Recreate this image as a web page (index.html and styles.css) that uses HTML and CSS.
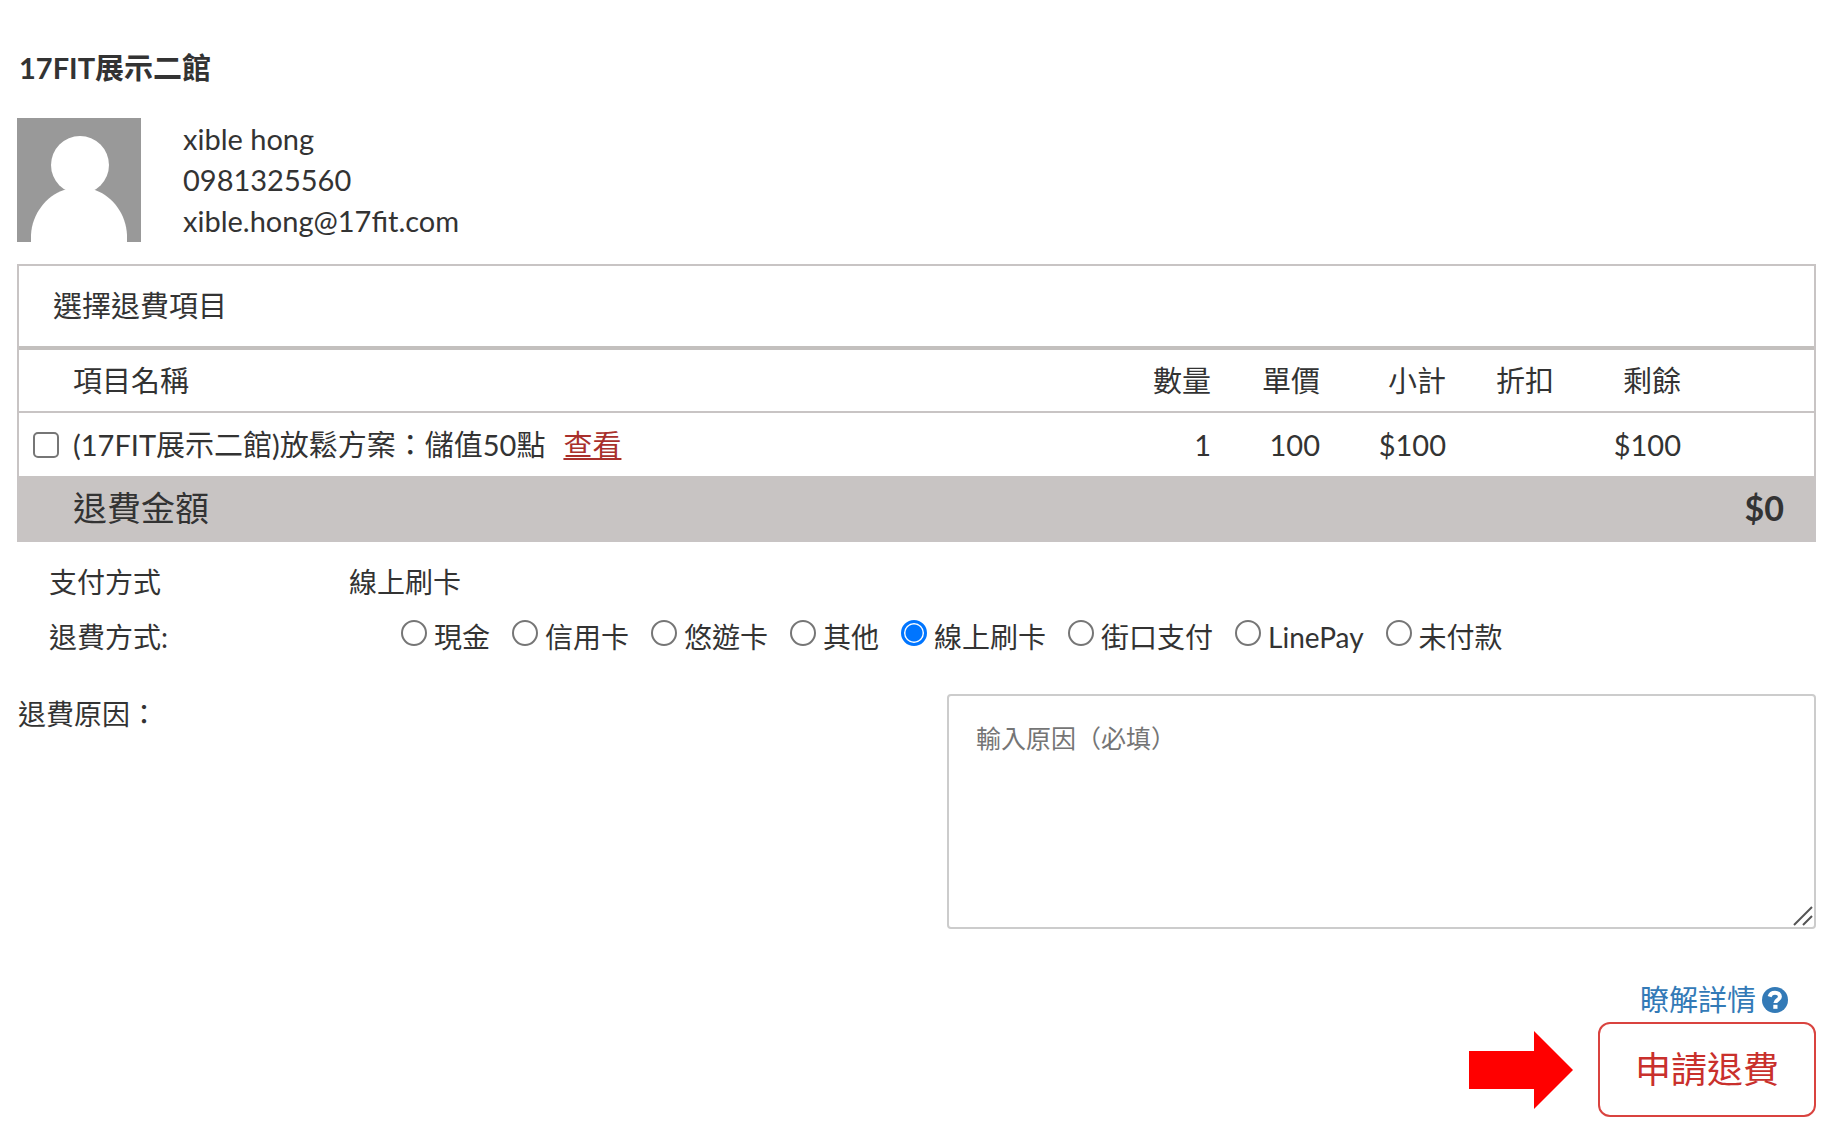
FILE: index.html
```html
<!DOCTYPE html>
<html lang="zh-Hant">
<head>
  <meta charset="utf-8">
  <meta name="viewport" content="width=device-width, initial-scale=1">
  <title>申請退費</title>
  <link rel="stylesheet" href="styles.css">
</head>
<body>
  <main class="page">
    <h1 class="store">17FIT展示二館</h1>

    <section class="member">
      <svg class="avatar" viewBox="0 0 124 124" role="img" aria-label="會員頭像">
        <rect width="124" height="124" fill="#999"/>
        <path d="M14 124V117C15 96 29 78 47 72H78C97 79 109 97 110 117V124Z" fill="#fff"/>
        <circle cx="63" cy="47" r="29" fill="#fff"/>
      </svg>
      <div class="member-info">
        <div>xible hong</div>
        <div>0981325560</div>
        <div>xible.hong@17fit.com</div>
      </div>
    </section>

    <form class="refund">
      <section class="panel">
        <h2 class="panel-title">選擇退費項目</h2>
        <table class="items">
          <colgroup>
            <col class="col-check"><col><col class="col-qty"><col class="col-price"><col class="col-sub"><col class="col-off"><col class="col-left"><col class="col-end">
          </colgroup>
          <thead>
            <tr>
              <th></th>
              <th class="name">項目名稱</th>
              <th>數量</th>
              <th>單價</th>
              <th>小計</th>
              <th>折扣</th>
              <th>剩餘</th>
              <th></th>
            </tr>
          </thead>
          <tbody>
            <tr>
              <td class="check"><input type="checkbox" id="item1" class="tick"></td>
              <td class="name"><label for="item1">(17FIT展示二館)放鬆方案：儲值50點</label><a class="view" href="#">查看</a></td>
              <td>1</td>
              <td>100</td>
              <td>$100</td>
              <td></td>
              <td>$100</td>
              <td></td>
            </tr>
          </tbody>
          <tfoot>
            <tr>
              <td></td>
              <th class="name">退費金額</th>
              <td class="total" colspan="6">$0</td>
            </tr>
          </tfoot>
        </table>
      </section>

      <div class="field">
        <span class="field-label">支付方式</span>
        <span>線上刷卡</span>
      </div>
      <div class="field" role="radiogroup" aria-labelledby="method">
        <span class="field-label" id="method">退費方式:</span>
        <div class="options">
          <label class="option"><input type="radio" name="method" class="dot">現金</label>
          <label class="option"><input type="radio" name="method" class="dot">信用卡</label>
          <label class="option"><input type="radio" name="method" class="dot">悠遊卡</label>
          <label class="option"><input type="radio" name="method" class="dot">其他</label>
          <label class="option"><input type="radio" name="method" class="dot" checked>線上刷卡</label>
          <label class="option"><input type="radio" name="method" class="dot">街口支付</label>
          <label class="option"><input type="radio" name="method" class="dot">LinePay</label>
          <label class="option"><input type="radio" name="method" class="dot">未付款</label>
        </div>
      </div>

      <div class="reason">
        <label for="reason">退費原因：</label>
        <div class="reason-box">
          <textarea id="reason" placeholder="輸入原因（必填）"></textarea>
          <svg class="grip" viewBox="0 0 20 20" aria-hidden="true">
            <path d="M1 19L19 1M10 19L19 10" stroke="#555" stroke-width="2" fill="none"/>
          </svg>
        </div>
      </div>

      <div class="actions">
        <a class="more" href="#">瞭解詳情
          <svg class="help" viewBox="0 0 26 26" aria-hidden="true">
            <circle cx="13" cy="13" r="13" fill="#337ab7"/>
            <path d="M7.600 9.600C8.400 6.800 10.300 5.700 13 5.700C16 5.700 17.900 7.300 17.900 9.800C17.900 13 13.600 12.800 13.400 16" stroke="#fff" stroke-width="4" fill="none"/>
            <rect x="11.300" y="17.800" width="4.200" height="4" fill="#fff"/>
          </svg>
        </a>
        <div class="submit-row">
          <svg class="arrow" viewBox="0 0 104 78" aria-hidden="true">
            <path d="M0 20H65V0L104 39L65 78V58H0Z" fill="#f00"/>
          </svg>
          <button type="submit" class="submit">申請退費</button>
        </div>
      </div>
    </form>
  </main>
</body>
</html>
```
FILE: styles.css
```css
* {
  box-sizing: border-box;
}

body {
  margin: 0;
  background: #fff;
  color: #333;
  font-family: Lato, "Noto Sans CJK TC", sans-serif;
  font-size: 28px;
  line-height: 40px;
}

.page {
  padding: 48px 13px 12px 17px;
}

.store {
  margin: 0 0 30px;
  padding-left: 2px;
  font-size: 29px;
  font-weight: 700;
  line-height: 40px;
}

.member {
  display: flex;
  align-items: flex-start;
  gap: 42px;
  margin-bottom: 22px;
}

.avatar {
  width: 124px;
  height: 124px;
}

.member-info {
  font-size: 29px;
  line-height: 41px;
}

.panel {
  border: 2px solid #c8c4c4;
}

.panel-title {
  margin: 0;
  padding: 20px 34px;
  border-bottom: 4px solid #c3c0be;
  font-size: 29px;
  font-weight: 400;
  line-height: 40px;
}

.items {
  width: 100%;
  table-layout: fixed;
  border-spacing: 0;
}

.items th,
.items td {
  height: 63px;
  padding: 0;
  font-size: 29px;
  font-weight: 400;
  text-align: right;
}

.items thead th {
  border-bottom: 2px solid #c8c4c4;
}

.items .name {
  text-align: left;
}

.items tfoot th,
.items tfoot td {
  height: 64px;
  background: #c8c4c3;
  font-size: 34px;
}

.items .total {
  padding-right: 30px;
  font-weight: 700;
}

.items .check {
  padding-left: 14px;
  text-align: left;
}

.col-check { width: 54px; }
.col-qty { width: 109px; }
.col-price { width: 109px; }
.col-sub { width: 126px; }
.col-off { width: 108px; }
.col-left { width: 127px; }
.col-end { width: 133px; }

.tick,
.dot {
  flex: none;
  width: 26px;
  height: 26px;
  margin: 0;
  appearance: none;
  background: #fff;
  border: 2px solid #767676;
}

.tick {
  display: block;
  border-radius: 5px;
}

.dot {
  border-radius: 50%;
}

.dot:checked {
  border: 3px solid #0075ff;
  background: radial-gradient(circle, #0075ff 8px, #fff 9px);
}

.view {
  margin-left: 18px;
  color: #a9302c;
}

.field {
  display: flex;
  padding-left: 32px;
  margin-top: 15px;
}

.panel + .field {
  margin-top: 20px;
}

.field-label {
  flex: none;
  width: 300px;
}

.options {
  display: flex;
  flex-wrap: wrap;
  gap: 22px;
  padding-left: 52px;
}

.option {
  display: flex;
  gap: 7px;
}

.option .dot {
  margin-top: 3px;
}

.reason {
  display: flex;
  justify-content: space-between;
  padding-left: 1px;
  margin-top: 37px;
}

.reason-box {
  position: relative;
  width: calc(50% - 30px);
}

.reason textarea {
  display: block;
  width: 100%;
  height: 235px;
  padding: 22px 27px;
  border: 2px solid #ccc;
  border-radius: 4px;
  color: #333;
  font: inherit;
  font-size: 25px;
  line-height: 40px;
  resize: none;
}

.reason textarea::placeholder {
  color: #757575;
}

.grip {
  position: absolute;
  right: 3px;
  bottom: 3px;
  width: 20px;
  height: 20px;
}

.actions {
  display: flex;
  flex-direction: column;
  align-items: flex-end;
  gap: 2px;
  margin-top: 51px;
}

.more {
  display: flex;
  align-items: center;
  gap: 6px;
  margin-right: 28px;
  color: #337ab7;
  font-size: 29px;
  text-decoration: none;
}

.help {
  width: 26px;
  height: 26px;
}

.submit-row {
  display: flex;
  align-items: center;
  gap: 25px;
}

.arrow {
  width: 104px;
  height: 78px;
}

.submit {
  padding: 20px 35px;
  border: 2px solid #d9433f;
  border-radius: 12px;
  background: #fff;
  color: #c9302c;
  font-family: inherit;
  font-size: 36px;
  line-height: 51px;
}
```
